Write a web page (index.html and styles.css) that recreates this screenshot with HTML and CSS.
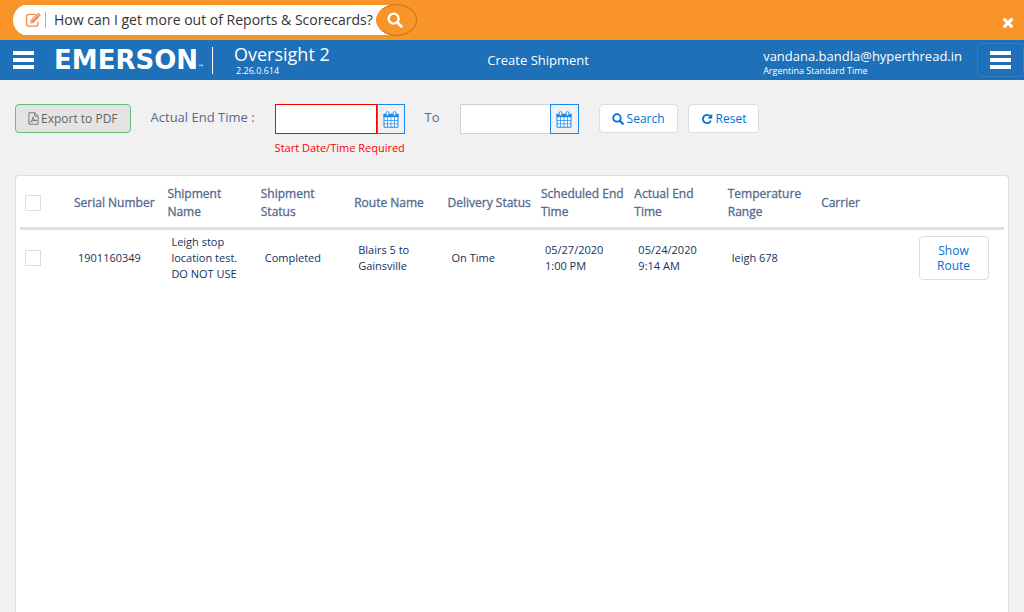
FILE: index.html
```html
<!DOCTYPE html>
<html lang="en">
<head>
<meta charset="utf-8">
<meta name="viewport" content="width=device-width, initial-scale=1">
<title>Oversight 2 - Create Shipment</title>
<link rel="stylesheet" href="styles.css">
</head>
<body>
<svg class="defs" aria-hidden="true">
  <symbol id="search" viewBox="0 0 16 16"><circle cx="6.6" cy="6.6" r="5" fill="none" stroke="currentColor" stroke-width="2.4"/><path d="M10.4 10.4L14.4 14.4" stroke="currentColor" stroke-width="2.8" stroke-linecap="round"/></symbol>
  <symbol id="calendar" viewBox="0 0 16 17"><path d="M1 3.5h14v12.7H1z" fill="#fff" stroke="currentColor" stroke-width="1"/><path d="M.5 2.8h15v3.4H.5z" fill="currentColor"/><path d="M4.500 6v10M8 6v10M11.500 6v10M1 9.500h14M1 12.800h14" stroke="currentColor" stroke-width=".7" fill="none"/><rect x="3.200" y=".6" width="2.600" height="4" rx="1.200" fill="#fff" stroke="currentColor" stroke-width=".9"/><rect x="10.200" y=".6" width="2.600" height="4" rx="1.200" fill="#fff" stroke="currentColor" stroke-width=".9"/></symbol>
</svg>
<div class="banner">
  <div class="ask">
    <svg class="edit" viewBox="0 0 18 16" aria-hidden="true"><path d="M11 2H4Q1.700 2 1.700 4.300v8Q1.700 14.500 4 14.500h7.500q2.200 0 2.200-2.200V9.500" fill="none" stroke="currentColor" stroke-width="1.400"/><path d="M5.600 8.400L12.400 1.600 15.400 4.600 8.600 11.400H5.600z" fill="currentColor"/><path d="M13.100.9q.8-.8 1.600 0l1.500 1.500q.7.700 0 1.500l-.5.500-3-3z" fill="currentColor"/><path d="M7.500 8.500l5-5M6.500 9.200l1.400 1.400" stroke="#fff" stroke-width=".7"/></svg>
    <span class="question">How can I get more out of Reports &amp; Scorecards?</span>
    <button class="ask-go" type="button" aria-label="Search help"><svg viewBox="0 0 16 16"><use href="#search"/></svg></button>
  </div>
  <button class="close" type="button" aria-label="Close"><svg viewBox="0 0 12 12"><path d="M2.800 2.800l6.400 6.400M9.200 2.800l-6.400 6.400" stroke="currentColor" stroke-width="3.200" stroke-linecap="square"/></svg></button>
</div>
<header class="topbar">
  <button class="menu" type="button" aria-label="Main menu"><span class="bars"></span></button>
  <div class="logo">EMERSON<span class="tm">™</span></div>
  <div class="product"><span class="product-name">Oversight 2</span><span class="version">2.26.0.614</span></div>
  <h1 class="title">Create Shipment</h1>
  <div class="user"><span class="email">vandana.bandla@hyperthread.in</span><span class="zone">Argentina Standard Time</span></div>
  <button class="menu menu-user" type="button" aria-label="User menu"><span class="bars"></span></button>
</header>
<main>
  <form class="filters">
    <button class="btn export" type="button"><svg class="pdf" viewBox="0 0 12 14" aria-hidden="true"><path d="M1 .7h6.500L11 4.200v9.100H1zM7.300.8v3.600H11M2.500 11.500Q5 9.500 5.600 5M5.500 6q.8 3.200 4.200 3.800M3.500 10.200Q6.500 8.800 9.500 9" fill="none" stroke="currentColor" stroke-width=".9"/></svg>Export to PDF</button>
    <label class="label" for="start">Actual End Time :</label>
    <div class="field start">
      <div class="date"><input id="start" class="invalid" type="text"><button type="button" aria-label="Pick start date"><svg viewBox="0 0 16 17"><use href="#calendar"/></svg></button></div>
      <p class="error">Start Date/Time Required</p>
    </div>
    <label class="label" for="end">To</label>
    <div class="field end">
      <div class="date"><input id="end" type="text"><button type="button" aria-label="Pick end date"><svg viewBox="0 0 16 17"><use href="#calendar"/></svg></button></div>
    </div>
    <button class="btn" type="button"><svg viewBox="0 0 16 16" aria-hidden="true"><use href="#search"/></svg>Search</button>
    <button class="btn reset" type="button"><svg viewBox="0 0 16 16" aria-hidden="true"><path d="M13.200 10.300A5.600 5.600 0 1 1 12.200 4.200" fill="none" stroke="currentColor" stroke-width="2.400"/><path d="M15 1v6.200H8.800z" fill="currentColor"/></svg>Reset</button>
  </form>
  <section class="card">
    <table>
      <colgroup><col class="pick"><col span="10"></colgroup>
      <thead>
        <tr><th><input type="checkbox" aria-label="Select all"></th><th>Serial Number</th><th>Shipment Name</th><th>Shipment Status</th><th>Route Name</th><th>Delivery Status</th><th>Scheduled End Time</th><th>Actual End Time</th><th>Temperature Range</th><th>Carrier</th><th></th></tr>
      </thead>
      <tbody>
        <tr><td><input type="checkbox" aria-label="Select 1901160349"></td><td>1901160349</td><td>Leigh stop location test. DO NOT USE</td><td>Completed</td><td>Blairs 5 to Gainsville</td><td>On Time</td><td>05/27/2020 1:00 PM</td><td>05/24/2020 9:14 AM</td><td>leigh 678</td><td></td><td><button class="btn route" type="button">Show Route</button></td></tr>
      </tbody>
    </table>
  </section>
</main>
</body>
</html>
```
FILE: styles.css
```css
* { box-sizing: border-box; }
body {
  margin: 0;
  height: 100vh;
  display: flex;
  flex-direction: column;
  overflow: hidden;
  background: #f1f1f1;
  color: #16325c;
  font: 13px/18px "Open Sans", sans-serif;
}
button, input { font: inherit; color: inherit; margin: 0; }
button { padding: 0; border: 0; background: none; }
.defs { position: absolute; width: 0; height: 0; }

.banner {
  display: flex;
  justify-content: space-between;
  height: 40px;
  padding: 4px 10px 4px 13px;
  background: #f99429;
}
.ask {
  display: flex;
  align-items: center;
  height: 32px;
  padding-left: 12px;
  background: linear-gradient(#fff, #fff) 0 1px / calc(100% - 20px) 30px no-repeat;
  border-radius: 16px;
}
.edit { width: 17px; height: 16px; color: #f58a4b; }
.question {
  position: relative;
  margin-left: 12px;
  font-size: 14px;
  line-height: 20px;
  color: #333;
}
.question::before {
  content: "";
  position: absolute;
  left: -9px;
  top: 2px;
  height: 16px;
  border-left: 1px solid #f9a060;
}
.ask-go {
  display: grid;
  place-items: center;
  width: 41px;
  height: 32px;
  padding-right: 2px;
  margin-left: 3px;
  border: 1px solid #c6761f;
  border-left-color: #f99429;
  border-radius: 50%;
  background: #f99429;
  color: #fff;
}
.ask-go svg { width: 16px; height: 16px; }
.close { align-self: flex-end; margin-bottom: 7px; color: #fff; }
.close svg { display: block; width: 12px; height: 12px; }

.topbar {
  display: grid;
  grid-template-columns: 54px 159px 11fr auto 15fr auto;
  align-items: center;
  height: 40px;
  background: #1e70b8;
  color: #fff;
}
.menu { width: 34px; height: 34px; padding-left: 13px; }
.bars {
  display: block;
  width: 21px;
  height: 18px;
  border-top: 4px solid #fff;
  border-bottom: 4px solid #fff;
  background: linear-gradient(#fff, #fff) 0 3px / 100% 4px no-repeat;
}
.logo {
  display: flex;
  align-items: flex-end;
  height: 27px;
  border-right: 1px solid #fff;
  font: bold 26px/27px "DejaVu Sans", sans-serif;
}
.tm { font-size: 6px; line-height: 14px; }
.product { display: flex; flex-direction: column; padding-left: 21px; }
.product-name { font-size: 18px; line-height: 22px; }
.version { padding-left: 2px; font-size: 9px; line-height: 12px; }
.title { margin: 0; font-size: 13px; font-weight: 400; }
.user { display: flex; flex-direction: column; justify-self: end; padding: 3px 1px 0 0; }
.email { line-height: 18px; }
.zone { font-size: 9px; line-height: 12px; }
.menu-user {
  width: 47px;
  margin-left: 14px;
  padding-left: 12px;
  border: 1px solid #347ec0;
  border-radius: 4px;
}

main {
  flex: 1;
  display: flex;
  flex-direction: column;
  padding: 24px 15px 0;
}
.filters { display: flex; align-items: flex-start; min-height: 71px; }
.btn {
  display: flex;
  align-items: center;
  justify-content: center;
  gap: 3px;
  height: 29px;
  padding: 0 12px;
  border: 1px solid #d8dde6;
  border-radius: 4px;
  background: #fff;
  color: #0070d2;
  font-size: 12px;
}
.btn svg { width: 12px; height: 12px; }
.btn .pdf { width: 11px; height: 13px; }
.export { gap: 2px; background: #e4e4e4; border-color: #67bd76; color: #666; }
.label { margin: 4px 20px 0; color: #54698d; }
.date { display: flex; height: 30px; }
.date input {
  flex: 1;
  min-width: 0;
  padding: 0 6px;
  border: 1px solid #ccd1da;
  border-right: 0;
  background: #fff;
}
.date .invalid { border: 1px solid #f00; }
.date button {
  display: grid;
  place-items: center;
  width: 29px;
  border: 1px solid #1589ee;
  color: #1589ee;
}
.start .date button { width: 28px; }
.date svg { width: 16px; height: 17px; }
.start { width: 130px; }
.end { width: 119px; margin-right: 20px; }
.error { margin: 5px 0 0; font-size: 11px; color: #f00; white-space: nowrap; }
.reset { margin-left: 10px; }

.card {
  flex: 1;
  padding: 4px;
  border: 1px solid #d8dde6;
  border-bottom: 0;
  border-radius: 4px 4px 0 0;
  background: #fff;
}
table { width: 100%; table-layout: fixed; border-collapse: collapse; }
.pick { width: 50px; }
th {
  height: 48px;
  padding: 0 0 0 4px;
  border-bottom: 3px solid #dde1e5;
  text-align: left;
  font-size: 12px;
  font-weight: 500;
  -webkit-text-stroke: 0.3px;
  color: #54698d;
}
td { height: 59px; padding: 0 8px; font-size: 11px; line-height: 16px; }
th:first-child, td:first-child { padding: 0 5px; }
input[type="checkbox"] {
  appearance: none;
  display: block;
  width: 16px;
  height: 16px;
  border: 1px solid #d8dde6;
  background: #fff;
}
.route { width: 70px; height: 44px; font-size: 12px; line-height: 15px; }
```
